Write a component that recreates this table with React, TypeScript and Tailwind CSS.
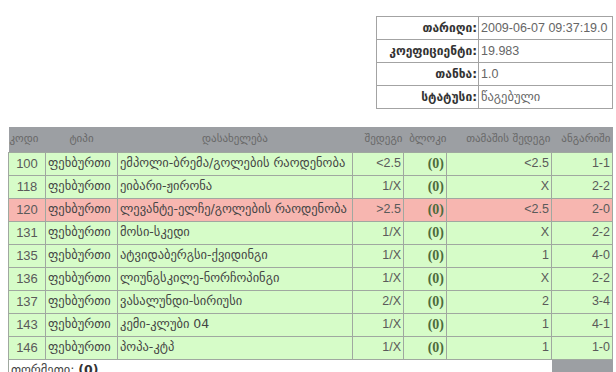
import React from 'react';

type Row = {
  code: string;
  name: string;
  pick: string;
  result: string;
  score: string;
  lost?: boolean;
};

const rows: Row[] = [
  { code: '100', name: 'ემპოლი-ბრემა/გოლების რაოდენობა', pick: '<2.5', result: '<2.5', score: '1-1' },
  { code: '118', name: 'ეიბარი-ჟირონა', pick: '1/X', result: 'X', score: '2-2' },
  { code: '120', name: 'ლევანტე-ელჩე/გოლების რაოდენობა', pick: '>2.5', result: '<2.5', score: '2-0', lost: true },
  { code: '131', name: 'მოსი-სკედი', pick: '1/X', result: 'X', score: '2-2' },
  { code: '135', name: 'ატვიდაბერგსი-ქვიდინგი', pick: '1/X', result: '1', score: '4-0' },
  { code: '136', name: 'ლიუნგსკილე-ნორჩოპინგი', pick: '1/X', result: 'X', score: '2-2' },
  { code: '137', name: 'ვასალუნდი-სირიუსი', pick: '2/X', result: '2', score: '3-4' },
  { code: '143', name: 'კემი-კლუბი 04', pick: '1/X', result: '1', score: '4-1' },
  { code: '146', name: 'პოპა-კტპ', pick: '1/X', result: '1', score: '1-0' },
];

const info = [
  ['თარიღი:', '2009-06-07 09:37:19.0'],
  ['კოეფიციენტი:', '19.983'],
  ['თანხა:', '1.0'],
  ['სტატუსი:', 'წაგებული'],
];

const geo = { fontFamily: '"DejaVu Sans", sans-serif' };

export default function App() {
  return (
    <div
      className="min-h-screen bg-white pl-[8px] pt-[16px] text-[12px] text-[#5a5a5a]"
      style={{ fontFamily: '"Liberation Sans", "DejaVu Sans", sans-serif' }}
    >
      {/* Ticket summary */}
      <div className="flex justify-end pr-[3px]">
        <table className="border-collapse border border-[#a3a3a3] w-[237px] table-fixed">
          <colgroup>
            <col className="w-[102px]" />
            <col />
          </colgroup>
          <tbody>
            {info.map(([label, value]) => (
              <tr key={label} className="h-[23px]">
                <td className="border border-[#a3a3a3] text-right pr-[1px] font-bold text-[#333] whitespace-nowrap" style={geo}>
                  {label}
                </td>
                <td className="border border-[#a3a3a3] pl-[2px] text-[#666] text-[12.5px] whitespace-nowrap">{value}</td>
              </tr>
            ))}
          </tbody>
        </table>
      </div>

      {/* Events */}
      <table className="mt-[18px] w-[604px] table-fixed border-collapse">
        <colgroup>
          <col className="w-[37px]" />
          <col className="w-[72px]" />
          <col className="w-[235px]" />
          <col className="w-[51px]" />
          <col className="w-[43px]" />
          <col className="w-[105px]" />
          <col className="w-[61px]" />
        </colgroup>
        <thead>
          <tr className="h-[25px] bg-[#9c9fa3] text-[#686868] text-[11px]" style={geo}>
            <th className="font-normal text-left pl-[1px] whitespace-nowrap">კოდი</th>
            <th className="font-normal">ტიპი</th>
            <th className="font-normal">დასახელება</th>
            <th className="font-normal text-right pr-[1px] whitespace-nowrap">შედეგი</th>
            <th className="font-normal text-right whitespace-nowrap">ბლოკი</th>
            <th className="font-normal text-right pr-[1px] whitespace-nowrap">თამაშის შედეგი</th>
            <th className="font-normal text-right pr-[2px] whitespace-nowrap">ანგარიში</th>
          </tr>
        </thead>
        <tbody>
          {rows.map((r) => (
            <tr key={r.code} className={`h-[23px] ${r.lost ? 'bg-[#f7b6b0]' : 'bg-[#d6fcc8]'}`}>
              <td className="border border-[#a0a8a0] text-center text-[13px]">{r.code}</td>
              <td className="border border-[#a0a8a0] pl-[2px] text-[#444] text-[12.5px] whitespace-nowrap" style={geo}>
                ფეხბურთი
              </td>
              <td className="border border-[#a0a8a0] pl-[2px] text-[#444] text-[12.5px] whitespace-nowrap overflow-hidden" style={geo}>
                {r.name}
              </td>
              <td className="border border-[#a0a8a0] text-right pr-[2px] text-[12.5px]">{r.pick}</td>
              <td className="border border-[#a0a8a0] text-right pr-[2px] font-bold text-[#4d6b3c] text-[14px]" style={{ fontFamily: '"Liberation Serif", serif' }}>
                (0)
              </td>
              <td className="border border-[#a0a8a0] text-right pr-[2px] text-[12.5px]">{r.result}</td>
              <td className="border border-[#a0a8a0] text-right pr-[2px] text-[12.5px]">{r.score}</td>
            </tr>
          ))}
          <tr className="h-[23px]">
            <td colSpan={6} className="border-l border-[#a0a8a0] pl-[2px] text-[#444] text-[12.5px] align-top pt-[1px]" style={geo}>
              თორმეთი: <span className="font-bold text-[#333]">(0)</span>
            </td>
            <td className="bg-[#9c9fa3]"></td>
          </tr>
        </tbody>
      </table>
    </div>
  );
}
